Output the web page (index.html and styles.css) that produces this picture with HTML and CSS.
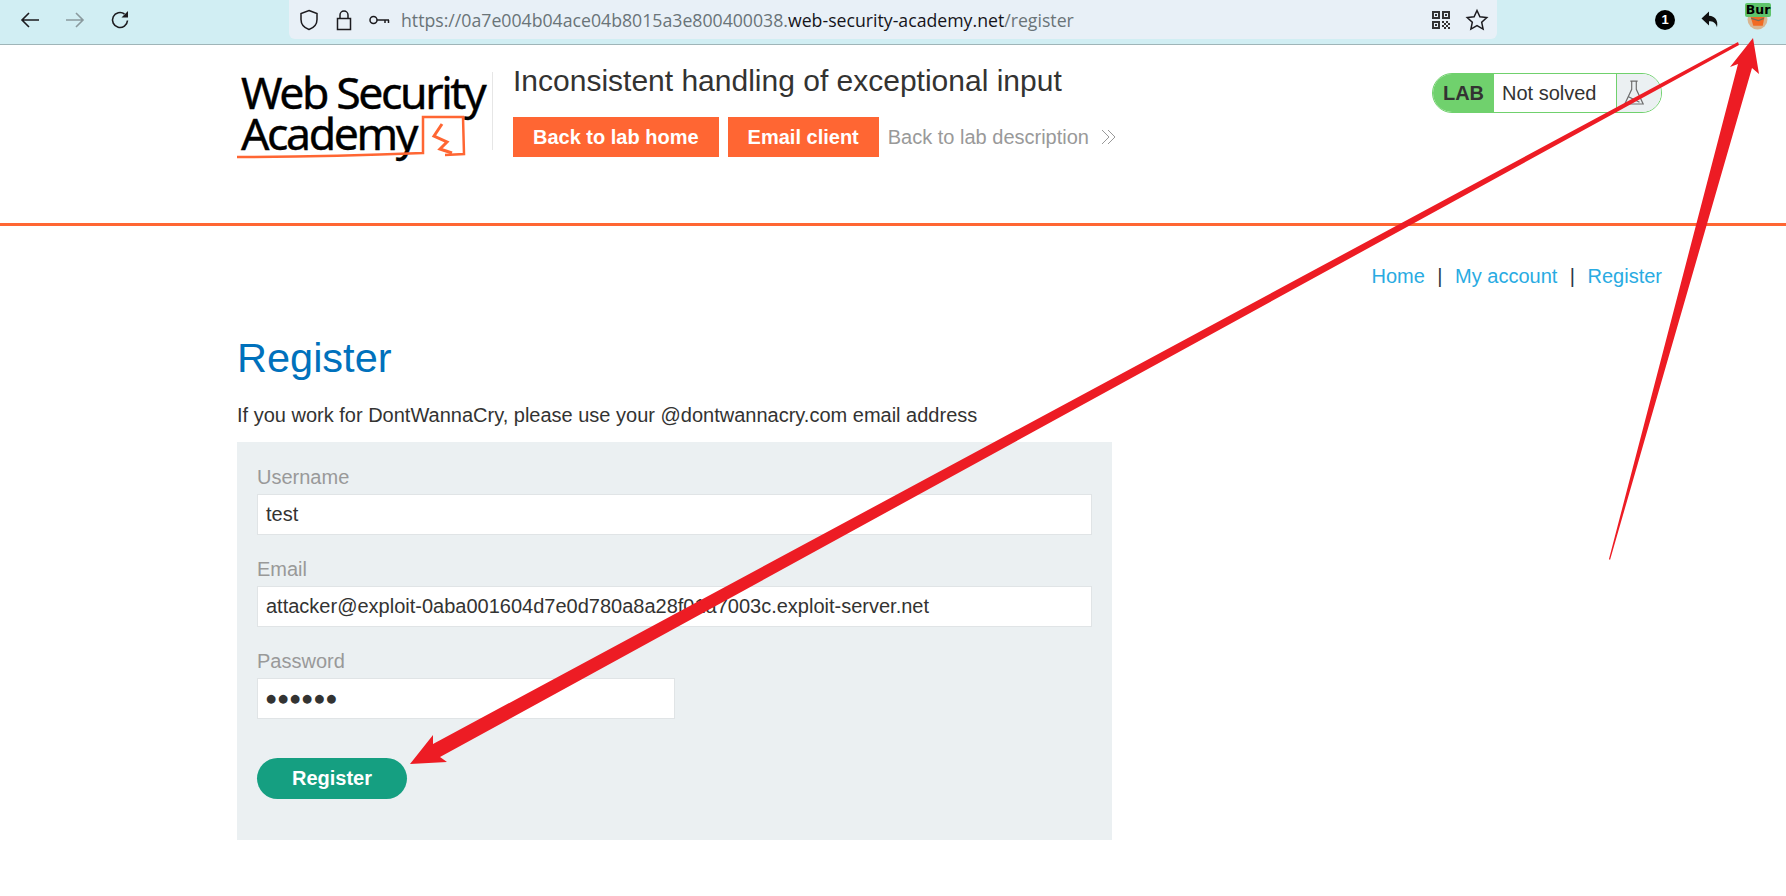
FILE: index.html
```html
<!DOCTYPE html>
<html lang="en">
<head>
    <meta charset="UTF-8">
    <title>Inconsistent handling of exceptional input</title>
    <link rel="stylesheet" href="styles.css">
</head>
<body>
    <div class="toolbar">
        <div class="nav-buttons">
            <svg class="tool-icon" viewBox="0 0 24 24"><path d="M21 12H4M11 5l-7 7 7 7"/></svg>
            <svg class="tool-icon dim" viewBox="0 0 24 24"><path d="M3 12h17M13 5l7 7-7 7"/></svg>
            <svg class="tool-icon" viewBox="0 0 24 24"><path d="M19.5 12.5a7.5 7.5 0 1 1-3-6.5"/><path class="solid" d="M20 3v6.5h-6.5z"/></svg>
        </div>
        <div class="urlbar">
            <svg class="url-icon" viewBox="0 0 24 24"><path d="M12 2.500l8 3v6c0 5-3.2 8.3-8 10-4.800-1.700-8-5-8-10v-6z"/></svg>
            <svg class="url-icon" viewBox="0 0 24 24"><path d="M5.500 10.500h13v11h-13zM8 10.500V7a4 4 0 0 1 8 0v3.500"/></svg>
            <svg class="url-icon key" viewBox="0 0 24 24"><circle cx="6.500" cy="12" r="3.500"/><path d="M10 12h12M18 12v3M21.500 12v3"/></svg>
            <div class="url-text">https://0a7e004b04ace04b8015a3e800400038.<span class="url-host">web-security-academy.net</span>/register</div>
            <svg class="url-qr" viewBox="0 0 18 18">
                <path d="M0 0h8v8H0zM2 2v4h4V2zM10 0h8v8h-8zM12 2v4h4V2zM0 10h8v8H0zM2 12v4h4v-4z" fill-rule="evenodd"/>
                <path d="M3 3h2v2H3zM13 3h2v2h-2zM3 13h2v2H3zM10 10h2v2h-2zM14 10h2v2h-2zM12 12h2v2h-2zM16 12h2v2h-2zM10 14h2v2h-2zM14 14h2v2h-2zM12 16h2v2h-2zM16 16h2v2h-2z"/>
            </svg>
            <svg class="url-icon star" viewBox="0 0 24 24"><path d="M12 2.500l2.900 6.300 6.900.8-5.100 4.700 1.400 6.800-6.100-3.400-6.100 3.400 1.400-6.800L2.200 9.600l6.900-.8z"/></svg>
        </div>
        <div class="extensions">
            <div class="ext-badge">1</div>
            <svg class="ext-back" viewBox="0 0 24 24"><path d="M10 3.500L2.500 10.500l7.500 7v-4.300c4 0 6.500 1 8 6 1.500-7-2-11-8-11.500z"/></svg>
            <div class="ext-burp">
                <svg class="burp-face" viewBox="0 0 20 20"><circle cx="10" cy="10" r="9.500" fill="#d9b48f"/><path d="M3 6h14l-2 10H6z" fill="#f26a22"/><path d="M4 9l7 2 5-2" fill="none" stroke="#7a6a58" stroke-width="1.200"/></svg>
                <span class="burp-label">Bur</span>
            </div>
        </div>
    </div>

    <header class="lab-header">
        <div class="logo">
            <div class="logo-text">Web Security<br>Academy</div>
            <svg class="logo-mark" viewBox="0 0 256 90">
                <path class="mark-line" d="M0 85Q90 85 186 81V45H226L227 82L208 83"/>
                <path class="mark-bolt" d="M205 52L197 64L210 70L203 77L215 81"/>
            </svg>
        </div>
        <div class="lab-title-block">
            <h2 class="lab-title">Inconsistent handling of exceptional input</h2>
            <div class="lab-links">
                <a class="btn-orange">Back to lab home</a>
                <a class="btn-orange">Email client</a>
                <a class="lab-desc">Back to lab description
                    <svg class="chevrons" viewBox="0 0 16 16"><path d="M2 1l7 7-7 7M8 1l7 7-7 7"/></svg>
                </a>
            </div>
        </div>
        <div class="lab-status">
            <span class="status-tag">LAB</span>
            <span class="status-text">Not solved</span>
            <span class="status-icon">
                <svg viewBox="0 0 24 30"><path d="M8 2h8M9.500 2v9L2 27h20l-7.500-16V2M6 19l12 6M18 19L6 25"/></svg>
            </span>
        </div>
    </header>

    <main class="content">
        <nav class="top-links">
            <a>Home</a><span class="sep">|</span><a>My account</a><span class="sep">|</span><a>Register</a>
        </nav>
        <h1 class="page-title">Register</h1>
        <p class="intro">If you work for DontWannaCry, please use your @dontwannacry.com email address</p>
        <form class="register-form">
            <label>Username</label>
            <div class="field">test</div>
            <label>Email</label>
            <div class="field">attacker@exploit-0aba001604d7e0d780a8a28f01a7003c.exploit-server.net</div>
            <label>Password</label>
            <div class="field short dots">●●●●●●</div>
            <button type="button" class="btn-register">Register</button>
        </form>
    </main>

    <svg class="annotations" viewBox="0 0 1786 896">
        <polygon fill="#ed1c24" points="1738,42 433,744 433,735 410,764 447,762 440,757 1739,45"/>
        <polygon fill="#ed1c24" points="1753,38 1759,74 1752,68 1610,560 1609,559 1738,64 1730,67"/>
    </svg>
</body>
</html>
```

FILE: styles.css
```css
* {
    margin: 0;
    padding: 0;
    box-sizing: border-box;
}

body {
    position: relative;
    width: 1786px;
    height: 896px;
    overflow: hidden;
    background: #fff;
    font-family: 'Liberation Sans', Arial, sans-serif;
    color: #333332;
}

.toolbar {
    display: flex;
    height: 45px;
    background: #d1eef3;
    border-bottom: 1px solid #9fb5b8;
}

.nav-buttons {
    display: flex;
    align-items: center;
    gap: 21px;
    width: 289px;
    height: 39px;
    padding-left: 18px;
}

.tool-icon {
    width: 24px;
    height: 24px;
    fill: none;
    stroke: #1c1b1f;
    stroke-width: 1.6;
}

.tool-icon.dim {
    stroke: #8a9a9e;
}

.tool-icon .solid {
    fill: #1c1b1f;
    stroke: none;
}

.urlbar {
    display: flex;
    align-items: center;
    width: 1208px;
    height: 39px;
    padding-left: 8px;
    background: #e8f0f7;
    border-radius: 0 0 6px 6px;
}

.url-icon {
    width: 24px;
    height: 24px;
    margin-right: 11px;
    fill: none;
    stroke: #1c1b1f;
    stroke-width: 1.5;
}

.url-icon.key {
    margin-right: 10px;
}

.url-text {
    flex: 1;
    font-family: 'Open Sans', sans-serif;
    font-size: 17.700px;
    color: #6a7478;
    white-space: nowrap;
}

.url-host {
    color: #15141a;
}

.url-qr {
    width: 18px;
    height: 18px;
    margin-right: 15px;
    fill: #333;
}

.url-icon.star {
    margin-right: 8px;
}

.extensions {
    display: flex;
    align-items: center;
    flex: 1;
    height: 39px;
    padding-left: 158px;
}

.ext-badge {
    width: 20px;
    height: 20px;
    border-radius: 50%;
    background: #000;
    color: #fff;
    font-size: 13px;
    font-weight: bold;
    line-height: 20px;
    text-align: center;
}

.ext-back {
    width: 24px;
    height: 24px;
    margin-left: 24px;
    fill: #111;
}

.ext-burp {
    position: relative;
    align-self: flex-start;
    width: 26px;
    height: 30px;
    margin: 3px 0 0 22px;
}

.burp-face {
    position: absolute;
    left: 2px;
    top: 6px;
    width: 21px;
    height: 21px;
}

.burp-label {
    position: absolute;
    left: 0;
    top: 0;
    width: 26px;
    height: 14px;
    background: #5fc46b;
    border-radius: 2px;
    font-family: 'DejaVu Sans', sans-serif;
    font-size: 12.500px;
    font-weight: bold;
    line-height: 14px;
    text-align: center;
    color: #000;
}

.lab-header {
    display: flex;
    align-items: flex-start;
    height: 181px;
    padding: 27px 124px 0 237px;
    border-bottom: 3px solid #ff6633;
}

.logo {
    position: relative;
    width: 256px;
    height: 78px;
    margin-right: 20px;
    border-right: 1px solid #e6e6e6;
}

.logo-text {
    margin: -1px 0 0 4px;
    font-family: 'Noto Sans', sans-serif;
    font-size: 44.600px;
    line-height: 41px;
    letter-spacing: -2.400px;
    color: #000;
    white-space: nowrap;
    -webkit-text-stroke: 0.4px #000;
}

.logo-mark {
    position: absolute;
    left: 0;
    top: 0;
    width: 256px;
    height: 90px;
    overflow: visible;
    fill: none;
    stroke: #ff6633;
}

.mark-line {
    stroke-width: 2.500;
}

.mark-bolt {
    stroke-width: 3;
}

.lab-title-block {
    flex: 1;
}

.lab-title {
    margin-top: -11px;
    font-size: 30px;
    font-weight: normal;
    line-height: 40px;
}

.lab-links {
    display: flex;
    align-items: center;
    gap: 9px;
    margin-top: 16px;
}

.btn-orange {
    padding: 0 20px;
    background: #ff6633;
    color: #fff;
    font-size: 20px;
    font-weight: bold;
    line-height: 40px;
}

.lab-desc {
    display: flex;
    align-items: center;
    gap: 11px;
    font-size: 20px;
    color: #999;
}

.chevrons {
    width: 16px;
    height: 16px;
    fill: none;
    stroke: #999;
    stroke-width: 1;
}

.lab-status {
    display: flex;
    height: 40px;
    margin-top: 1px;
    margin-left: -1px;
    border: 1px solid #70d16d;
    border-radius: 20px;
    overflow: hidden;
    font-size: 20px;
    line-height: 38px;
}

.status-tag {
    width: 61px;
    background: #70d16d;
    font-weight: bold;
    text-align: center;
}

.status-text {
    width: 123px;
    padding-left: 8px;
    border-right: 1px solid #70d16d;
}

.status-icon {
    display: flex;
    align-items: center;
    justify-content: center;
    width: 44px;
    padding-right: 11px;
    background: #ebf0f2;
}

.status-icon svg {
    width: 22px;
    height: 28px;
    fill: none;
    stroke: #6e6e6e;
    stroke-width: 1.300;
}

.content {
    padding: 0 124px 0 237px;
}

.top-links {
    display: flex;
    justify-content: flex-end;
    padding-top: 38px;
    font-size: 20px;
    line-height: 24px;
    color: #29abe2;
}

.top-links .sep {
    margin: 0 12.500px;
    color: #2b3a4a;
}

.page-title {
    margin-top: 47px;
    font-size: 41.500px;
    font-weight: normal;
    line-height: 46px;
    color: #0071bc;
}

.intro {
    margin-top: 22px;
    font-size: 20px;
    line-height: 24px;
}

.register-form {
    display: flex;
    flex-direction: column;
    align-items: flex-start;
    width: 875px;
    height: 398px;
    margin-top: 15px;
    padding: 23px 20px 0;
    background: #ebf0f2;
}

.register-form label {
    font-size: 20px;
    line-height: 24px;
    color: #999;
}

.field {
    width: 835px;
    height: 41px;
    margin: 5px 0 22px;
    padding-left: 8px;
    background: #fff;
    border: 1px solid #e0e4e6;
    font-size: 20px;
    line-height: 39px;
}

.field.short {
    width: 418px;
}

.field.dots {
    font-family: 'DejaVu Sans', sans-serif;
    font-size: 11.500px;
    letter-spacing: 2px;
}

.btn-register {
    width: 150px;
    height: 41px;
    margin-top: 17px;
    border: none;
    border-radius: 21px;
    background: #159f81;
    color: #fff;
    font-family: inherit;
    font-size: 20px;
    font-weight: bold;
}

.annotations {
    position: absolute;
    left: 0;
    top: 0;
    width: 1786px;
    height: 896px;
    pointer-events: none;
}
```
